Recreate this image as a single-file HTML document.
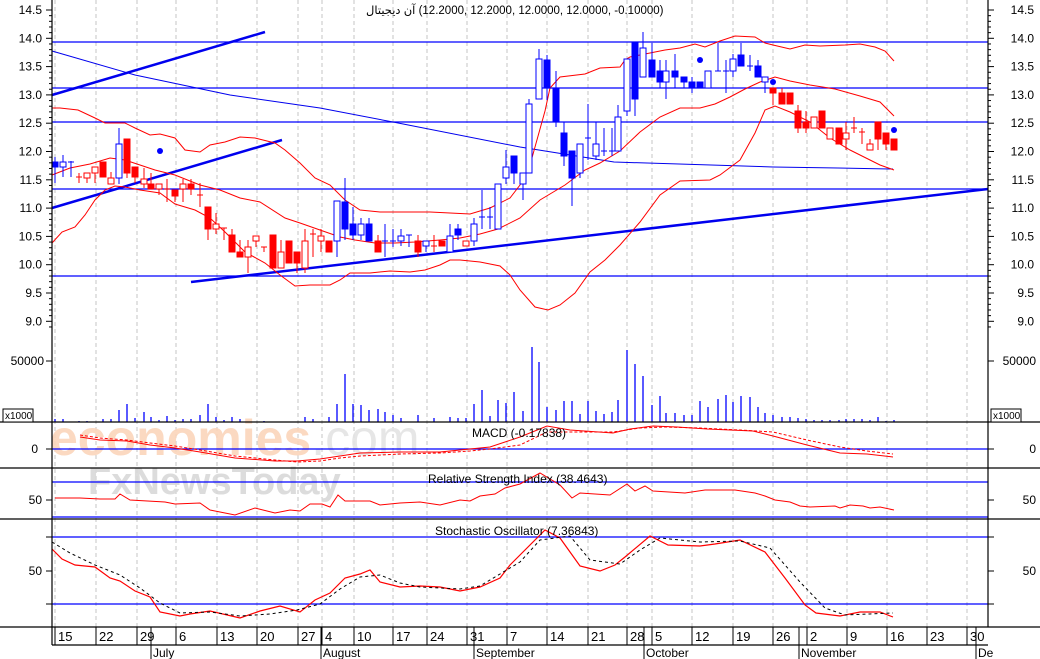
<!DOCTYPE html>
<html><head><meta charset="utf-8"><style>
html,body{margin:0;padding:0;background:#fff;}
svg{display:block;font-family:"Liberation Sans","Noto Sans CJK SC",sans-serif;}
#t{position:absolute;left:366px;top:3px;font:11.5px "Liberation Sans","DejaVu Sans",sans-serif;color:#000;direction:ltr;white-space:nowrap;}
</style></head><body>
<div id="t" dir="ltr"><bdi>آن ديجيتال</bdi> (12.2000, 12.2000, 12.0000, 12.0000, -0.10000)</div>
<svg id="s" width="1040" height="659" viewBox="0 0 1040 659" xmlns="http://www.w3.org/2000/svg">
<rect width="1040" height="659" fill="#fff"/>
<g id="grid"></g>
<text x="50" y="455" font-size="50" font-weight="bold" fill="#fbd5bb" opacity="0.9">economies<tspan fill="#e4e4e4" font-weight="normal">.com</tspan></text>
<text x="88" y="494" font-size="38" font-weight="bold" fill="#d9d9d9" opacity="0.9">FxNewsToday</text>
<g id="lines"></g>
<g id="c"></g>
<g id="axes"></g>
<text x="472" y="437" font-size="12" fill="#000">MACD (-0.17838)</text>
<text x="428" y="483" font-size="12" fill="#000">Relative Strength Index (38.4643)</text>
<text x="435" y="535" font-size="12" fill="#000">Stochastic Oscillator (7.36843)</text>
</svg>
<script>
const NS="http://www.w3.org/2000/svg";
function el(p,t,a,txt){const e=document.createElementNS(NS,t);for(const k in a)e.setAttribute(k,a[k]);if(txt!==undefined)e.textContent=txt;document.getElementById(p).appendChild(e);return e;}
function pl(p,pts,st,w,dash){el(p,'polyline',{points:pts.map(q=>q.join(',')).join(' '),fill:'none',stroke:st,'stroke-width':w||1,'stroke-dasharray':dash||'none'});}
const days=[[55,"15"],[96,"22"],[137,"29"],[176,"6"],[217,"13"],[257,"20"],[298,"27"],[322,"4"],[354,"10"],[393,"17"],[427,"24"],[467,"31"],[507,"7"],[547,"14"],[588,"21"],[627,"28"],[652,"5"],[692,"12"],[733,"19"],[773,"26"],[807,"2"],[847,"9"],[887,"16"],[927,"23"],[967,"30"]];
days.forEach(d=>{el('grid','line',{x1:d[0],y1:0,x2:d[0],y2:627,stroke:'#c4c4c4','stroke-dasharray':'4,3'});
 el('axes','line',{x1:d[0],y1:627,x2:d[0],y2:645,stroke:'#000'});
 el('axes','text',{x:d[0]+3,y:641,'font-size':'13',fill:'#000'},d[1]);});
[[151,"July"],[321,"August"],[474,"September"],[644,"October"],[799,"November"],[976,"De"]].forEach(m=>{el('axes','line',{x1:m[0],y1:627,x2:m[0],y2:659,stroke:'#000'});el('axes','text',{x:m[0]+2,y:657,'font-size':'12',fill:'#000'},m[1]);});
[42,88,122,189,276,449,482,517,537,604].forEach(y=>el('lines','line',{x1:52,y1:y,x2:988,y2:y,stroke:'#0000ff','stroke-width':1.2}));
el('lines','line',{x1:52,y1:95,x2:265,y2:32,stroke:'#0000ee','stroke-width':2.5});
el('lines','line',{x1:52,y1:208,x2:282,y2:140,stroke:'#0000ee','stroke-width':2.5});
el('lines','line',{x1:191,y1:282,x2:988,y2:189,stroke:'#0000ee','stroke-width':2.5});
pl('lines',[[52,51],[135,75],[230,95],[320,108],[393,122],[520,147],[614,162],[773,167],[838,168],[893,169]],'#0000ee',1);
pl('lines',[[52,108],[60,108],[78,110],[95,118],[105,123],[125,123],[135,128],[150,135],[160,134],[175,138],[185,150],[200,152],[210,145],[225,142],[240,137],[255,138],[275,143],[285,150],[300,163],[315,178],[330,185],[345,200],[360,210],[380,212],[430,212],[470,214],[490,208],[510,198],[520,185],[530,165],[545,111],[550,88],[560,77],[585,74],[600,68],[620,67],[625,60],[630,57],[640,55],[665,50],[680,48],[695,44],[705,47],[720,41],[735,36],[755,37],[765,43],[773,45],[790,49],[805,45],[820,46],[845,45],[860,44],[875,47],[885,51],[894,61]],'#ff0000',1);
pl('lines',[[52,175],[70,168],[90,164],[110,158],[125,160],[140,165],[155,170],[175,175],[200,185],[220,190],[240,198],[260,202],[285,218],[300,223],[320,230],[340,237],[355,240],[375,243],[395,243],[415,242],[440,240],[460,238],[480,234],[498,229],[520,218],[540,200],[565,185],[585,170],[600,163],[620,151],[640,132],[660,117],[680,108],[700,108],[715,104],[730,97],[745,89],[760,82],[775,77],[790,81],[810,85],[835,89],[860,96],[880,102],[894,116]],'#ff0000',1);
pl('lines',[[52,243],[62,232],[75,227],[85,215],[95,200],[105,190],[115,186],[125,187],[140,190],[160,193],[175,204],[195,210],[210,218],[225,232],[245,252],[265,263],[280,275],[295,286],[310,285],[330,285],[340,280],[350,273],[370,273],[390,271],[410,272],[425,270],[440,265],[450,260],[460,260],[480,262],[500,266],[510,275],[520,290],[535,307],[548,310],[560,305],[575,293],[590,272],[605,260],[620,245],[640,222],[660,195],[680,181],[710,180],[720,175],[740,160],[755,133],[765,110],[775,106],[790,112],[810,122],[830,138],[850,150],[870,160],[880,165],[894,170]],'#ff0000',1);
const C=[[55,162,167,157,183,'b','f'],[63,162,167,155,177,'b','h'],[71,162,162,161,177,'b','x'],[79,177,177,173,183,'r','x'],[87,173,178,173,183,'r','h'],[95,167,173,167,183,'r','h'],[103,162,177,162,177,'r','f'],[111,178,184,172,184,'r','h'],[119,144,178,128,184,'b','h'],[127,139,173,139,178,'r','f'],[135,167,177,167,183,'r','f'],[144,179,184,168,188,'r','h'],[151,184,189,173,189,'r','f'],[159,184,189,184,195,'r','h'],[167,189,189,179,202,'r','x'],[175,190,196,190,202,'r','f'],[183,184,189,179,202,'r','h'],[191,184,189,179,195,'r','f'],[200,195,195,183,207,'r','x'],[208,207,229,207,240,'r','f'],[216,224,229,213,234,'r','h'],[224,228,228,228,240,'r','x'],[232,235,252,229,252,'r','f'],[240,252,257,240,257,'r','f'],[248,247,257,240,273,'r','h'],[256,236,241,236,247,'r','h'],[264,247,247,247,252,'r','x'],[273,235,268,235,268,'r','f'],[281,252,268,240,268,'r','h'],[289,241,263,241,263,'r','f'],[297,252,263,252,273,'r','f'],[305,241,268,229,273,'r','h'],[313,234,234,229,257,'r','x'],[321,236,241,229,252,'r','h'],[329,241,252,241,252,'r','f'],[337,201,241,201,257,'b','h'],[345,202,229,178,240,'b','f'],[353,224,235,207,240,'b','f'],[361,224,235,218,240,'b','h'],[369,224,241,218,241,'b','f'],[378,241,252,235,252,'r','f'],[385,241,241,224,257,'b','x'],[393,241,241,229,247,'b','x'],[401,236,241,229,246,'b','h'],[409,235,235,235,247,'b','x'],[418,241,252,235,257,'r','f'],[426,241,246,241,252,'b','h'],[434,246,246,235,252,'r','x'],[442,241,246,241,246,'r','f'],[450,236,252,224,252,'b','h'],[458,229,235,224,240,'b','f'],[466,241,246,241,246,'r','h'],[474,224,241,218,246,'b','h'],[482,217,217,190,229,'b','x'],[490,217,217,207,229,'b','x'],[498,184,229,184,229,'b','h'],[506,167,178,150,184,'b','h'],[514,156,173,156,184,'b','f'],[523,173,184,173,200,'b','h'],[529,104,173,99,173,'b','h'],[539,59,99,49,99,'b','h'],[547,60,88,55,100,'b','f'],[556,88,122,71,127,'b','f'],[564,133,156,122,166,'b','f'],[572,151,178,151,206,'b','f'],[580,144,173,144,178,'b','h'],[588,138,138,104,160,'b','x'],[596,144,156,122,160,'b','h'],[604,151,151,128,156,'b','x'],[612,151,151,128,156,'b','x'],[618,117,151,105,151,'b','h'],[627,59,111,59,116,'b','h'],[635,43,99,43,116,'b','f'],[643,48,77,32,77,'b','h'],[652,60,77,43,77,'b','f'],[660,71,82,60,88,'b','f'],[666,71,82,60,99,'b','h'],[675,71,77,54,88,'b','f'],[684,77,82,77,88,'b','f'],[692,82,88,77,93,'b','f'],[700,82,88,82,88,'b','f'],[708,71,88,71,88,'b','h'],[718,71,71,43,71,'b','x'],[726,71,71,60,93,'b','x'],[733,59,71,54,77,'b','h'],[741,55,66,43,66,'b','f'],[750,66,66,55,71,'b','x'],[758,66,77,60,77,'b','f'],[765,77,82,77,93,'b','h'],[773,88,93,88,105,'r','f'],[782,93,104,88,104,'r','f'],[790,93,104,93,104,'r','f'],[798,111,128,105,133,'r','f'],[806,122,128,111,133,'r','f'],[814,117,128,117,128,'r','h'],[822,111,128,111,128,'r','f'],[830,128,139,128,139,'r','h'],[839,128,144,128,144,'r','f'],[846,133,139,122,150,'r','h'],[854,128,128,117,133,'r','x'],[862,132,132,128,144,'r','x'],[870,144,150,139,150,'r','h'],[878,122,139,122,150,'r','f'],[886,133,144,133,150,'r','f'],[894,139,150,139,150,'r','f']];
C.forEach(c=>{const col=c[5]=='b'?'#0000ff':'#ff0000';
 el('c','line',{x1:c[0],y1:c[3],x2:c[0],y2:c[4],stroke:col});
 if(c[6]=='x')el('c','line',{x1:c[0]-3,y1:c[1],x2:c[0]+3,y2:c[1],stroke:col});
 else el('c','rect',{x:c[0]-3,y:c[1],width:6,height:Math.max(1,c[2]-c[1]),fill:c[6]=='f'?col:'#fff',stroke:col});});
[[160,151],[700,60],[773,82],[894,130]].forEach(d=>el('c','circle',{cx:d[0],cy:d[1],r:3,fill:'#0000ff'}));
const V=[[55,419],[63,419],[79,421],[87,421],[103,419],[111,419],[119,410],[127,404],[135,418],[144,412],[151,417],[159,420],[167,416],[175,420],[183,419],[191,419],[200,415],[208,404],[216,417],[224,420],[232,417],[240,419],[264,421],[305,417],[313,419],[329,417],[337,404],[345,374],[353,404],[361,405],[369,410],[378,409],[385,412],[393,415],[401,418],[418,415],[434,418],[450,417],[458,418],[466,418],[474,404],[482,390],[490,416],[498,400],[506,403],[514,392],[523,411],[532,347],[539,362],[547,407],[556,410],[564,401],[572,401],[580,414],[588,401],[596,411],[604,414],[612,412],[618,400],[627,350],[635,364],[643,376],[652,405],[660,396],[666,413],[675,413],[684,415],[692,415],[700,401],[708,407],[718,399],[726,395],[733,402],[741,396],[750,397],[758,407],[765,413],[773,415],[782,417],[790,417],[798,418],[806,419],[814,420],[822,420],[830,420],[839,420],[846,419],[854,419],[862,419],[870,420],[878,417],[886,421],[894,420]];
V.forEach(v=>el('c','line',{x1:v[0],y1:v[1],x2:v[0],y2:422,stroke:'#0000ff','stroke-width':1.3}));
pl('lines',[[80,437],[100,440],[127,441],[150,445],[175,448],[200,452],[235,458],[275,461],[297,461],[320,459],[340,456],[360,453],[400,452],[440,452],[470,449],[490,447],[505,442],[520,437],[547,426],[570,430],[613,433],[630,429],[653,426],[677,427],[707,429],[753,431],[773,436],[807,445],[840,453],[867,454],[893,457]],'#ff0000',1);
pl('lines',[[80,435],[100,438],[127,440],[150,443],[175,446],[200,450],[235,456],[275,460],[297,462],[320,461],[340,458],[360,456],[400,454],[440,453],[470,451],[490,449],[520,445],[547,432],[570,432],[613,432],[640,428],[665,427],[700,428],[740,430],[773,432],[807,440],[840,447],[867,451],[893,454]],'#ff0000',1,'3,2');
pl('lines',[[55,498],[80,498],[100,499],[115,499],[120,494],[130,500],[165,502],[175,504],[200,503],[210,510],[235,515],[255,508],[275,513],[290,510],[300,511],[310,504],[322,504],[330,507],[338,495],[345,501],[370,501],[380,505],[400,503],[420,502],[440,505],[460,500],[470,501],[480,496],[495,494],[505,488],[520,484],[540,473],[560,485],[572,498],[580,493],[610,495],[627,484],[635,491],[645,486],[653,491],[685,493],[705,490],[735,490],[755,493],[765,496],[775,500],[790,502],[800,506],[810,507],[835,506],[840,508],[850,505],[863,506],[870,508],[880,507],[894,510]],'#ff0000',1);
pl('lines',[[52,549],[62,559],[75,565],[95,567],[110,578],[120,581],[135,591],[150,597],[160,612],[180,616],[190,614],[210,611],[240,618],[260,611],[280,606],[300,612],[315,600],[330,593],[345,578],[360,574],[370,570],[380,582],[400,587],[420,586],[440,587],[460,591],[480,587],[500,578],[510,565],[520,555],[545,530],[560,538],[580,566],[600,571],[615,565],[625,557],[650,536],[668,545],[700,546],[715,544],[740,540],[765,552],[785,578],[805,605],[816,613],[840,616],[860,612],[880,612],[893,617]],'#ff0000',1.2);
pl('lines',[[52,542],[70,553],[95,565],[120,575],[140,588],[160,603],[180,613],[210,612],[240,616],[270,614],[297,610],[320,604],[340,589],[360,577],[380,575],[400,583],[420,587],[460,589],[480,586],[500,574],[520,562],[540,540],[570,536],[590,560],[620,564],[640,550],[660,538],[700,542],[740,541],[770,548],[800,582],[825,608],[845,615],[870,614],[893,613]],'#000',1,'3,3');
[[52,0,52,627],[988,0,988,627],[0,422,1040,422],[0,468,1040,468],[0,519,1040,519],[0,627,1040,627],[52,645,988,645],[52,627,52,645]].forEach(l=>el('axes','line',{x1:l[0],y1:l[1],x2:l[2],y2:l[3],stroke:'#000','stroke-width':1.2}));
for(let i=0;i<=11;i++){const p=14.5-i*0.5,y=10+i*28.3;
 el('axes','text',{x:42,y:y+4,'font-size':'12','text-anchor':'end'},p.toFixed(1));
 el('axes','text',{x:1034,y:y+4,'font-size':'12','text-anchor':'end'},p.toFixed(1));
 el('axes','line',{x1:46,y1:y,x2:52,y2:y,stroke:'#000'});el('axes','line',{x1:988,y1:y,x2:994,y2:y,stroke:'#000'});
 for(let k=1;k<5;k++){const yy=y+k*5.66;if(yy<330){el('axes','line',{x1:49,y1:yy,x2:52,y2:yy,stroke:'#000'});el('axes','line',{x1:988,y1:yy,x2:991,y2:yy,stroke:'#000'});}}}
[[44,361,"50000"],[38,449,"0"],[42,500,"50"],[42,571,"50"]].forEach(t=>{el('axes','text',{x:t[0],y:t[1]+4,'font-size':'12','text-anchor':'end'},t[2]);el('axes','text',{x:1036,y:t[1]+4,'font-size':'12','text-anchor':'end'},t[2]);});
[[46,361],[46,449],[46,500],[46,571],[46,537],[46,604]].forEach(t=>{el('axes','line',{x1:t[0],y1:t[1],x2:52,y2:t[1],stroke:'#000'});el('axes','line',{x1:988,y1:t[1],x2:994,y2:t[1],stroke:'#000'});});
[[3,"x1000"],[991,"x1000"]].forEach(b=>{el('axes','rect',{x:b[0],y:409,width:30,height:13,fill:'#fff',stroke:'#000'});el('axes','text',{x:b[0]+2,y:419,'font-size':'10'},b[1]);});
</script>
</body></html>
